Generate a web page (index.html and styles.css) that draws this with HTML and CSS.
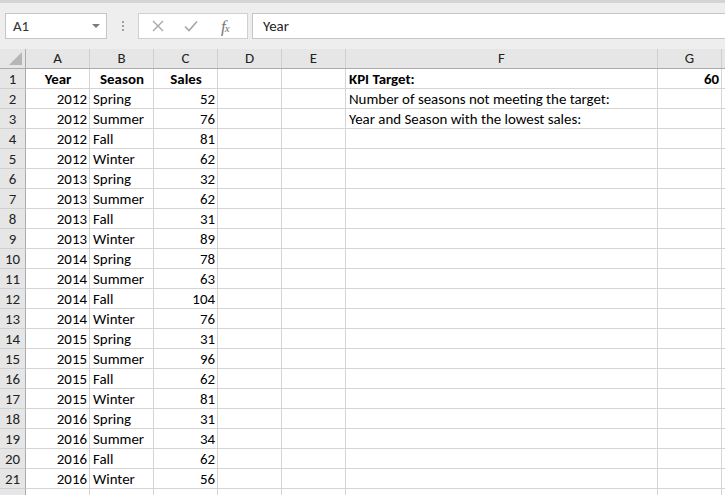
FILE: index.html
```html
<!DOCTYPE html>
<html>
<head>
<meta charset="utf-8">
<link rel="stylesheet" href="styles.css">
</head>
<body>
<div class="app">
  <div class="topband"></div>
  <div class="fbar">
    <div class="namebox"><span class="ref">A1</span><span class="dd"></span></div>
    <div class="dots"><i></i><i></i><i></i></div>
    <div class="btns">
      <svg class="ic" width="14" height="14" viewBox="0 0 14 14"><path d="M2 2L12 12M12 2L2 12" stroke="#a6a6a6" stroke-width="1.3" fill="none"/></svg>
      <svg class="ic" width="16" height="14" viewBox="0 0 16 14"><path d="M2 7.5L6 11.5L14 2.5" stroke="#a6a6a6" stroke-width="1.6" fill="none"/></svg>
      <span class="fx">f<sub>x</sub></span>
    </div>
    <div class="formula">Year</div>
  </div>
  <div class="sheet">
    <div class="corner"><span class="tri"></span></div>
    <div class="ch">A</div><div class="ch">B</div><div class="ch">C</div><div class="ch">D</div><div class="ch">E</div><div class="ch">F</div><div class="ch">G</div><div class="ch last"></div>
  </div>
  <div class="grid" id="grid">
    <div class="rh">1</div><div class="c b ctr">Year</div><div class="c b ctr">Season</div><div class="c b ctr">Sales</div><div class="c"></div><div class="c"></div><div class="c b">KPI Target:</div><div class="c b r">60</div><div class="c last"></div>
    <div class="rh">2</div><div class="c r">2012</div><div class="c">Spring</div><div class="c r">52</div><div class="c"></div><div class="c"></div><div class="c">Number of seasons not meeting the target:</div><div class="c"></div><div class="c last"></div>
    <div class="rh">3</div><div class="c r">2012</div><div class="c">Summer</div><div class="c r">76</div><div class="c"></div><div class="c"></div><div class="c">Year and Season with the lowest sales:</div><div class="c"></div><div class="c last"></div>
    <div class="rh">4</div><div class="c r">2012</div><div class="c">Fall</div><div class="c r">81</div><div class="c"></div><div class="c"></div><div class="c"></div><div class="c"></div><div class="c last"></div>
    <div class="rh">5</div><div class="c r">2012</div><div class="c">Winter</div><div class="c r">62</div><div class="c"></div><div class="c"></div><div class="c"></div><div class="c"></div><div class="c last"></div>
    <div class="rh">6</div><div class="c r">2013</div><div class="c">Spring</div><div class="c r">32</div><div class="c"></div><div class="c"></div><div class="c"></div><div class="c"></div><div class="c last"></div>
    <div class="rh">7</div><div class="c r">2013</div><div class="c">Summer</div><div class="c r">62</div><div class="c"></div><div class="c"></div><div class="c"></div><div class="c"></div><div class="c last"></div>
    <div class="rh">8</div><div class="c r">2013</div><div class="c">Fall</div><div class="c r">31</div><div class="c"></div><div class="c"></div><div class="c"></div><div class="c"></div><div class="c last"></div>
    <div class="rh">9</div><div class="c r">2013</div><div class="c">Winter</div><div class="c r">89</div><div class="c"></div><div class="c"></div><div class="c"></div><div class="c"></div><div class="c last"></div>
    <div class="rh">10</div><div class="c r">2014</div><div class="c">Spring</div><div class="c r">78</div><div class="c"></div><div class="c"></div><div class="c"></div><div class="c"></div><div class="c last"></div>
    <div class="rh">11</div><div class="c r">2014</div><div class="c">Summer</div><div class="c r">63</div><div class="c"></div><div class="c"></div><div class="c"></div><div class="c"></div><div class="c last"></div>
    <div class="rh">12</div><div class="c r">2014</div><div class="c">Fall</div><div class="c r">104</div><div class="c"></div><div class="c"></div><div class="c"></div><div class="c"></div><div class="c last"></div>
    <div class="rh">13</div><div class="c r">2014</div><div class="c">Winter</div><div class="c r">76</div><div class="c"></div><div class="c"></div><div class="c"></div><div class="c"></div><div class="c last"></div>
    <div class="rh">14</div><div class="c r">2015</div><div class="c">Spring</div><div class="c r">31</div><div class="c"></div><div class="c"></div><div class="c"></div><div class="c"></div><div class="c last"></div>
    <div class="rh">15</div><div class="c r">2015</div><div class="c">Summer</div><div class="c r">96</div><div class="c"></div><div class="c"></div><div class="c"></div><div class="c"></div><div class="c last"></div>
    <div class="rh">16</div><div class="c r">2015</div><div class="c">Fall</div><div class="c r">62</div><div class="c"></div><div class="c"></div><div class="c"></div><div class="c"></div><div class="c last"></div>
    <div class="rh">17</div><div class="c r">2015</div><div class="c">Winter</div><div class="c r">81</div><div class="c"></div><div class="c"></div><div class="c"></div><div class="c"></div><div class="c last"></div>
    <div class="rh">18</div><div class="c r">2016</div><div class="c">Spring</div><div class="c r">31</div><div class="c"></div><div class="c"></div><div class="c"></div><div class="c"></div><div class="c last"></div>
    <div class="rh">19</div><div class="c r">2016</div><div class="c">Summer</div><div class="c r">34</div><div class="c"></div><div class="c"></div><div class="c"></div><div class="c"></div><div class="c last"></div>
    <div class="rh">20</div><div class="c r">2016</div><div class="c">Fall</div><div class="c r">62</div><div class="c"></div><div class="c"></div><div class="c"></div><div class="c"></div><div class="c last"></div>
    <div class="rh">21</div><div class="c r">2016</div><div class="c">Winter</div><div class="c r">56</div><div class="c"></div><div class="c"></div><div class="c"></div><div class="c"></div><div class="c last"></div>
    <div class="rh"></div><div class="c"></div><div class="c"></div><div class="c"></div><div class="c"></div><div class="c"></div><div class="c"></div><div class="c"></div><div class="c last"></div>
  </div>
</div>
</body>
</html>
```
FILE: styles.css
```css
* { box-sizing: border-box; }
html, body { margin: 0; padding: 0; }
body {
  width: 725px;
  height: 495px;
  overflow: hidden;
  background: #ffffff;
  font-family: Calibri, Carlito, Lato, "Liberation Sans", sans-serif;
  font-size: 14.9px;
  color: #000;
}
.app { width: 725px; height: 495px; overflow: hidden; }
.topband { height: 3px; background: #d4d4d4; }
.fbar {
  height: 46px;
  background: #eeeeee;
  display: flex;
  align-items: flex-start;
  padding-top: 10px;
  padding-left: 5px;
}
.namebox {
  width: 102px;
  height: 26px;
  background: #fff;
  border: 1px solid #c6c6c6;
  display: flex;
  align-items: center;
  justify-content: space-between;
  padding: 0 6px 0 7px;
  color: #333;
}
.dd {
  width: 0; height: 0;
  border-left: 4px solid transparent;
  border-right: 4px solid transparent;
  border-top: 4px solid #7a7a7a;
}
.dots {
  width: 31px;
  height: 26px;
  display: flex;
  flex-direction: column;
  align-items: center;
  justify-content: center;
  gap: 2px;
}
.dots i { display: block; width: 2px; height: 2px; background: #a0a0a0; }
.btns {
  width: 110px;
  height: 26px;
  background: #fff;
  border: 1px solid #d0d0d0;
  display: flex;
  align-items: center;
  padding-left: 12px;
  gap: 18px;
}
.ic { display: block; }
.fx {
  font-family: "Liberation Serif", serif;
  font-style: italic;
  color: #777;
  font-size: 17px;
  margin-left: 4px;
  letter-spacing: -1px;
  line-height: 1;
}
.fx sub { font-size: 11px; vertical-align: 0; }
.formula {
  margin-left: 4px;
  flex: 1;
  height: 26px;
  background: #fff;
  border: 1px solid #c6c6c6;
  border-right: none;
  padding-left: 10px;
  line-height: 24px;
  color: #222;
}
.sheet {
  display: grid;
  grid-template-columns: 26px 64px 64px 64px 64px 64px 312px 64px 4px;
  height: 20px;
  background: #e6e6e6;
  border-bottom: 1px solid #ababab;
}
.corner { position: relative; border-right: 1px solid #ababab; }
.tri {
  position: absolute;
  right: 3px; bottom: 3px;
  width: 0; height: 0;
  border-left: 13px solid transparent;
  border-bottom: 13px solid #b6b6b6;
}
.ch {
  border-right: 1px solid #cfcfcf;
  text-align: center;
  line-height: 19px;
  color: #222;
}
.ch.last { border-right: none; }
.grid {
  display: grid;
  grid-template-columns: 26px 64px 64px 64px 64px 64px 312px 64px 4px;
  grid-auto-rows: 20px;
}
.rh {
  background: #e6e6e6;
  border-right: 1px solid #ababab;
  border-bottom: 1px solid #d0d0d0;
  text-align: center;
  line-height: 20px;
  color: #222;
}
.c {
  border-right: 1px solid #d4d4d4;
  border-bottom: 1px solid #d4d4d4;
  padding: 0 2px 0 3px;
  line-height: 20px;
  white-space: nowrap;
}
.c.last { border-right: none; }
.b { font-weight: bold; }
.r { text-align: right; }
.ctr { text-align: center; }
```
